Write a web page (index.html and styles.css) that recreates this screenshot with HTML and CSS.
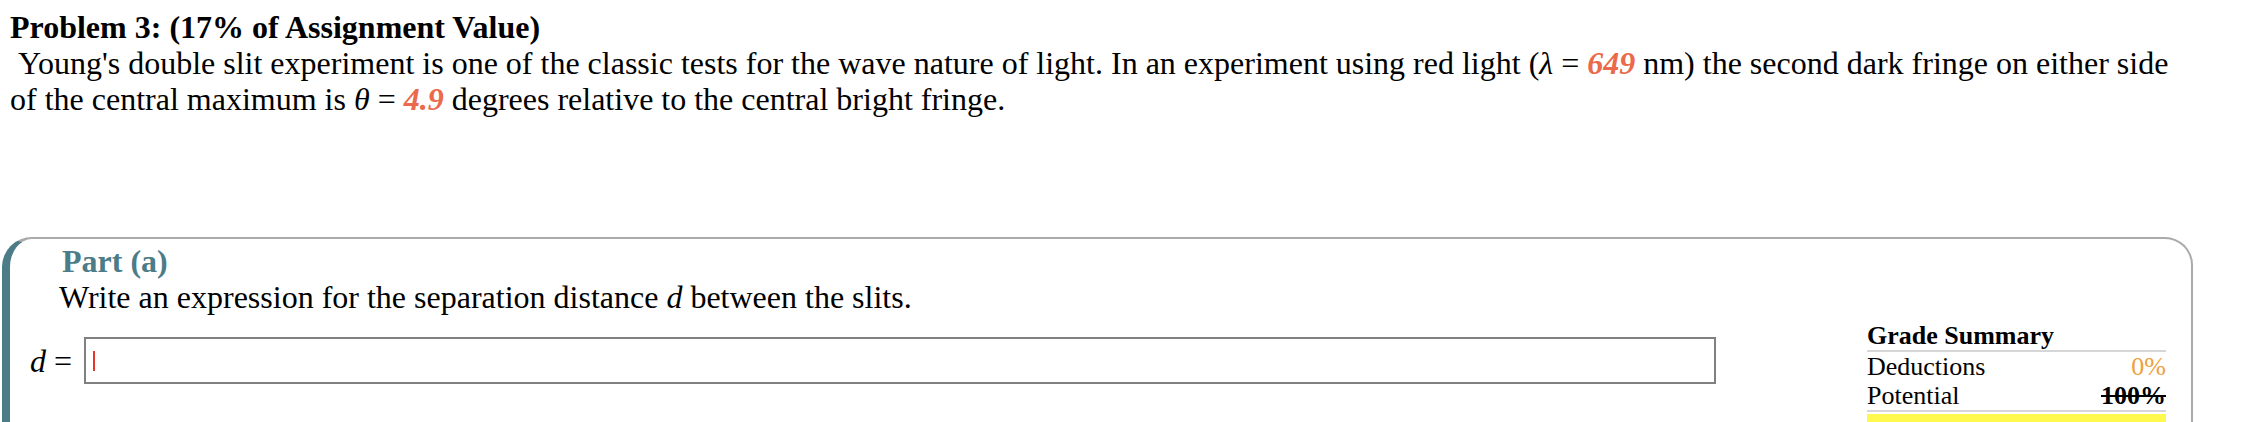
FILE: index.html
```html
<!DOCTYPE html>
<html>
<head>
<meta charset="utf-8">
<title>Problem 3</title>
<link rel="stylesheet" href="styles.css">
</head>
<body>
<div class="problem">
  <div class="title">Problem 3: (17% of Assignment Value)</div>
  <div class="statement">&nbsp;Young's double slit experiment is one of the classic tests for the wave nature of light. In an experiment using red light (<i>λ</i> = <span class="val">649</span> nm) the second dark fringe on either side of the central maximum is <i>θ</i> = <span class="val">4.9</span> degrees relative to the central bright fringe.</div>
</div>
<div class="part">
  <div class="part-title">Part (a)</div>
  <div class="prompt">Write an expression for the separation distance <i>d</i> between the slits.</div>
  <div class="answer-row">
    <div class="answer">
      <span class="lhs"><i>d</i> =</span>
      <div class="input"><span class="cursor"></span></div>
    </div>
    <div class="grade">
      <div class="grade-head">Grade Summary</div>
      <div class="grade-line"><span>Deductions</span><span class="ded">0%</span></div>
      <div class="grade-line"><span>Potential</span><span class="pot">100%</span></div>
      <div class="grade-bar"></div>
    </div>
  </div>
</div>
</body>
</html>
```
FILE: styles.css
```css
html, body {
  margin: 0;
  padding: 0;
  background: #ffffff;
  overflow: hidden;
}
body {
  font-family: "Liberation Serif", "Times New Roman", serif;
  color: #000;
  font-size: 32px;
  line-height: 36px;
}
.problem {
  padding: 9px 0 0 10px;
}
.title {
  font-weight: bold;
}
.statement {
  width: 2180px;
}
.val {
  color: #ea6a4b;
  font-weight: bold;
  font-style: italic;
}
.part {
  margin: 120px 0 0 2px;
  width: 2156px;
  height: 200px;
  border-top: 2px solid #aaaaaa;
  border-right: 2px solid #aaaaaa;
  border-left: 8px solid #4b7c88;
  border-radius: 30px 28px 0 0;
  padding: 4px 25px 0 0;
}
.part-title {
  margin-left: 52px;
  color: #4b7c88;
  font-weight: bold;
}
.prompt {
  margin-left: 49px;
}
.answer-row {
  display: flex;
  align-items: flex-start;
  margin-top: 22px;
}
.answer {
  display: flex;
  align-items: center;
  margin-left: 20px;
}
.lhs {
  width: 54px;
}
.input {
  width: 1621px;
  height: 43px;
  border: 2px solid #808080;
  display: flex;
  align-items: center;
  padding-left: 7px;
}
.cursor {
  width: 2px;
  height: 20px;
  background: #e8352a;
}
.grade {
  margin-left: auto;
  width: 299px;
  margin-top: -16px;
  font-size: 26px;
  line-height: 29px;
}
.grade-head {
  font-weight: bold;
  border-bottom: 2px solid #d6d6d6;
}
.grade-line {
  display: flex;
  justify-content: space-between;
  line-height: 29px;
}
.ded {
  color: #f0a03c;
}
.pot {
  font-weight: bold;
  text-decoration: line-through;
}
.grade-bar {
  border-top: 2px solid #d6d6d6;
  height: 20px;
  background: #fef94c;
  background-clip: content-box;
  padding-top: 2px;
}
```
